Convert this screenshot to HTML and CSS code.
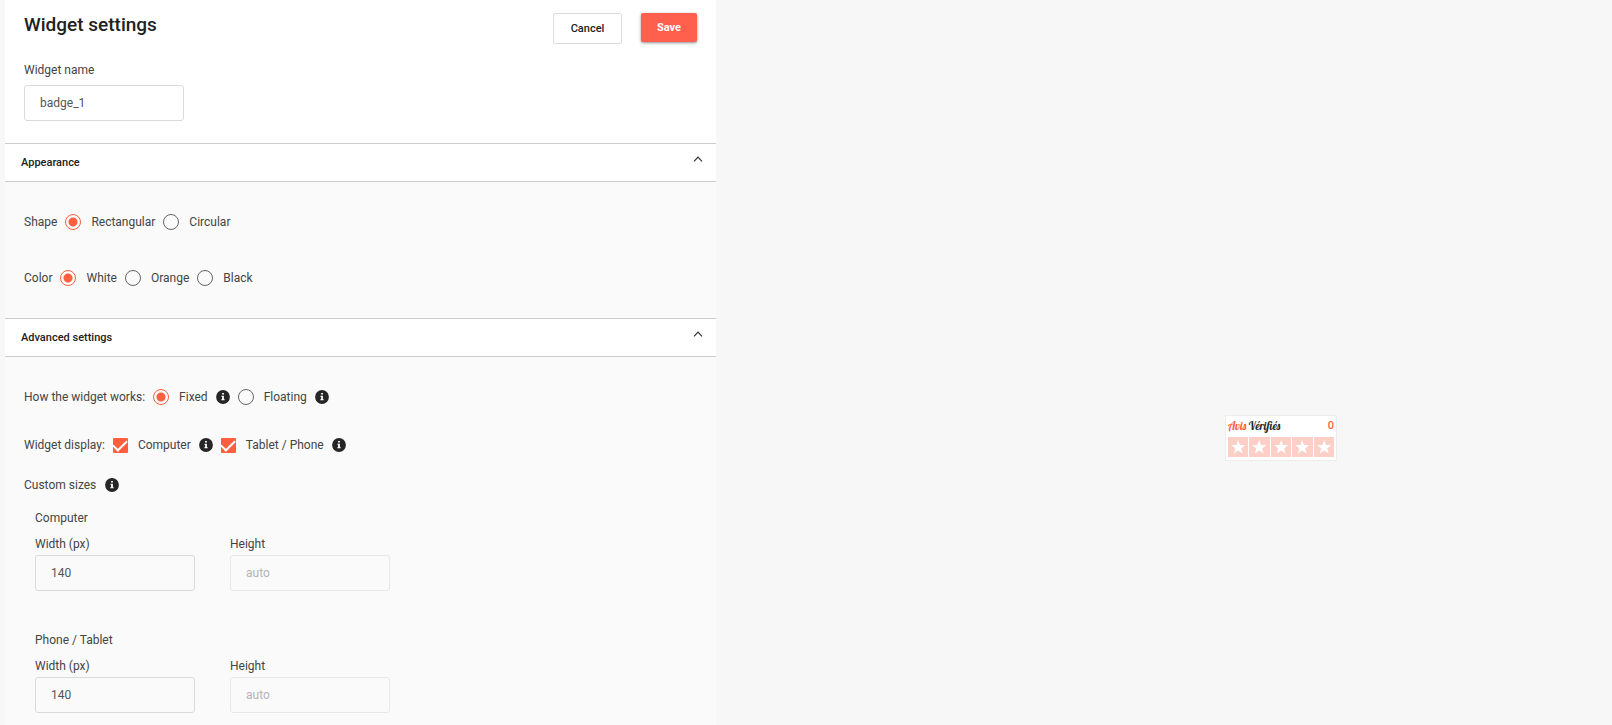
FILE: index.html
```
<!DOCTYPE html>
<html lang="en">
<head>
<meta charset="utf-8">
<title>Widget settings</title>
<link rel="stylesheet" href="styles.css">
</head>
<body>
<svg class="defs" aria-hidden="true">
  <symbol id="info" viewBox="0 0 14 14">
    <circle cx="7" cy="7" r="6.900" fill="#262626"/>
    <path d="M6.100 3h1.800v1.500H6.100zM5.400 5.800h2.500v3.500h.8v1H5.300v-1h.8V6.800h-.7z" fill="#fff"/>
  </symbol>
  <symbol id="chevron" viewBox="0 0 10 6">
    <path d="M1 5.400 5 1.200 9 5.400" fill="none" stroke="#333" stroke-width="1.200"/>
  </symbol>
  <symbol id="star" viewBox="0 0 20 20">
    <path d="M10 3l1.900 4.900 5.100.2-4 3.300 1.400 5.100-4.400-2.900-4.400 2.900L7 11.400 3 8.100l5.100-.2z" fill="#fff"/>
  </symbol>
</svg>
<div class="layout">
  <form class="settings">
    <header class="top">
      <div class="title-row">
        <h1>Widget settings</h1>
        <div class="actions">
          <button type="button" class="btn btn-cancel">Cancel</button>
          <button type="button" class="btn btn-save">Save</button>
        </div>
      </div>
      <label class="name-label" for="name">Widget name</label>
      <input class="field" id="name" type="text" value="badge_1">
    </header>

    <section>
      <h2><button type="button" class="section-head">Appearance<svg class="chevron"><use href="#chevron"/></svg></button></h2>
      <div class="section-body appearance">
        <div class="options" role="radiogroup" aria-labelledby="shape">
          <span class="caption" id="shape">Shape</span>
          <label class="option"><input type="radio" name="shape" checked>Rectangular</label>
          <label class="option"><input type="radio" name="shape">Circular</label>
        </div>
        <div class="options" role="radiogroup" aria-labelledby="color">
          <span class="caption" id="color">Color</span>
          <label class="option"><input type="radio" name="color" checked>White</label>
          <label class="option"><input type="radio" name="color">Orange</label>
          <label class="option"><input type="radio" name="color">Black</label>
        </div>
      </div>
    </section>

    <section>
      <h2><button type="button" class="section-head">Advanced settings<svg class="chevron"><use href="#chevron"/></svg></button></h2>
      <div class="section-body advanced">
        <div class="options" role="radiogroup" aria-labelledby="mode">
          <span class="caption" id="mode">How the widget works:</span>
          <label class="option"><input type="radio" name="mode" checked>Fixed</label>
          <svg class="info"><use href="#info"/></svg>
          <label class="option"><input type="radio" name="mode">Floating</label>
          <svg class="info"><use href="#info"/></svg>
        </div>
        <div class="options display" role="group" aria-labelledby="display">
          <span class="caption" id="display">Widget display:</span>
          <label class="option"><input type="checkbox" checked>Computer</label>
          <svg class="info"><use href="#info"/></svg>
          <label class="option"><input type="checkbox" checked>Tablet / Phone</label>
          <svg class="info"><use href="#info"/></svg>
        </div>
        <div class="options custom">
          <span class="caption">Custom sizes</span>
          <svg class="info"><use href="#info"/></svg>
        </div>
        <fieldset class="sizes">
          <legend>Computer</legend>
          <div class="pair">
            <div class="size"><label for="cw">Width (px)</label><input class="field" id="cw" type="text" value="140"></div>
            <div class="size"><label for="ch">Height</label><input class="field" id="ch" type="text" placeholder="auto" disabled></div>
          </div>
        </fieldset>
        <fieldset class="sizes">
          <legend>Phone / Tablet</legend>
          <div class="pair">
            <div class="size"><label for="pw">Width (px)</label><input class="field" id="pw" type="text" value="140"></div>
            <div class="size"><label for="ph">Height</label><input class="field" id="ph" type="text" placeholder="auto" disabled></div>
          </div>
        </fieldset>
      </div>
    </section>
  </form>

  <main class="preview">
    <div class="badge">
      <div class="badge-top">
        <span class="brand"><span class="brand-accent">Avis</span> Vérifiés</span>
        <span class="score">0</span>
      </div>
      <div class="stars">
        <svg class="star"><use href="#star"/></svg>
        <svg class="star"><use href="#star"/></svg>
        <svg class="star"><use href="#star"/></svg>
        <svg class="star"><use href="#star"/></svg>
        <svg class="star"><use href="#star"/></svg>
      </div>
    </div>
  </main>
</div>
</body>
</html>
```
FILE: styles.css
```
* { box-sizing: border-box; }

body {
  margin: 0;
  background: #f7f7f7;
  color: #444;
  font: 12px/16px Roboto, sans-serif;
}

.defs { position: absolute; width: 0; height: 0; }

.layout {
  display: grid;
  grid-template-columns: 711fr 896fr;
  min-height: 100vh;
  padding-left: 5px;
}

.settings { background: #fafafa; }

.top {
  padding: 13px 19px 22px;
  background: #fff;
}

.title-row {
  display: flex;
  justify-content: space-between;
  align-items: flex-start;
  height: 49px;
}

h1 {
  margin: 0;
  color: #212121;
  font-size: 19px;
  font-weight: 500;
  line-height: 24px;
}

.actions {
  display: flex;
  align-items: flex-start;
  gap: 19px;
}

.btn {
  border-radius: 2px;
  font: 500 11px/16px Roboto, sans-serif;
}

.btn-cancel {
  width: 69px;
  height: 31px;
  border: 1px solid #dcdcdc;
  background: #fff;
  color: #222;
}

.btn-save {
  width: 56px;
  height: 29px;
  border: 0;
  background: #ff5f4c;
  color: #fff;
  font-weight: 700;
  box-shadow: 0 1px 3px rgba(0, 0, 0, .45);
}

.name-label {
  display: block;
  margin-bottom: 7px;
}

.field {
  display: block;
  width: 160px;
  height: 36px;
  padding: 0 15px;
  border: 1px solid #dadada;
  border-radius: 3px;
  background: transparent;
  color: #555;
  font: 12px/16px Roboto, sans-serif;
}

.field:disabled { border-color: #e8e8e8; }
.field::placeholder { color: #b4b4b4; opacity: 1; }

h2 { margin: 0; font-size: 12px; }

.section-head {
  display: flex;
  justify-content: space-between;
  align-items: flex-start;
  width: 100%;
  height: 39px;
  padding: 11px 13px 0 16px;
  border: solid #ccc;
  border-width: 1px 0;
  background: #fff;
  color: #212121;
  font: 500 11px/16px Roboto, sans-serif;
}

.chevron { width: 10px; height: 6px; margin-top: 1px; }

.section-body { padding: 0 19px; }

.appearance {
  display: grid;
  gap: 32px;
  padding-top: 28px;
  padding-bottom: 28px;
}

.options {
  display: flex;
  align-items: center;
  gap: 8px;
  height: 24px;
}

.caption { margin-bottom: 1px; }

.option {
  display: flex;
  align-items: center;
  gap: 10px;
}

.option input {
  appearance: none;
  flex: none;
  width: 16px;
  height: 16px;
  margin: 0;
}

.option input[type="radio"] {
  border: 1px solid #666;
  border-radius: 50%;
}

.option input[type="radio"]:checked {
  border-color: #ff5f3f;
  background: radial-gradient(circle, #ff5f3f 4px, transparent 5px);
}

.option input[type="checkbox"] {
  display: grid;
  place-items: center;
  width: 15px;
  height: 15px;
  border-radius: 1px;
  background: #ff5f3f;
}

.option input[type="checkbox"]::before {
  content: "";
  width: 12px;
  height: 6px;
  margin-bottom: 3px;
  border: solid #fff;
  border-width: 0 0 2px 2px;
  transform: rotate(-45deg);
}

.info { flex: none; width: 14px; height: 14px; }

.advanced { padding-top: 28px; padding-bottom: 10px; }
.display { margin-top: 24px; }
.custom { gap: 9px; margin-top: 16px; }

.sizes {
  margin: 13px 0 0;
  padding: 0 0 0 11px;
  border: 0;
}

.sizes + .sizes { margin-top: 41px; }

.sizes legend { padding: 0; }

.pair {
  display: flex;
  gap: 35px;
  padding-top: 10px;
}

.size label { display: block; margin-bottom: 3px; }

.preview {
  display: flex;
  justify-content: center;
  padding: 415px 0 0 234px;
}

.badge {
  display: grid;
  grid-template-columns: minmax(0, 1fr);
  align-content: start;
  gap: 3px;
  width: 112px;
  height: 46px;
  padding: 2px;
  border: 1px solid #ededed;
  background: #fff;
}

.badge-top {
  display: flex;
  justify-content: space-between;
  align-items: center;
  height: 16px;
}

.brand {
  color: #1d2b30;
  font: 11px/16px Lobster, "Liberation Serif", serif;
}

.brand-accent { color: #ff5f3f; }

.score {
  color: #ff5f3f;
  font-size: 11px;
  font-weight: 500;
}

.stars { display: flex; gap: 1px; }

.star {
  flex: 1;
  min-width: 0;
  height: 20px;
  background: #fdcfc7;
}
```
